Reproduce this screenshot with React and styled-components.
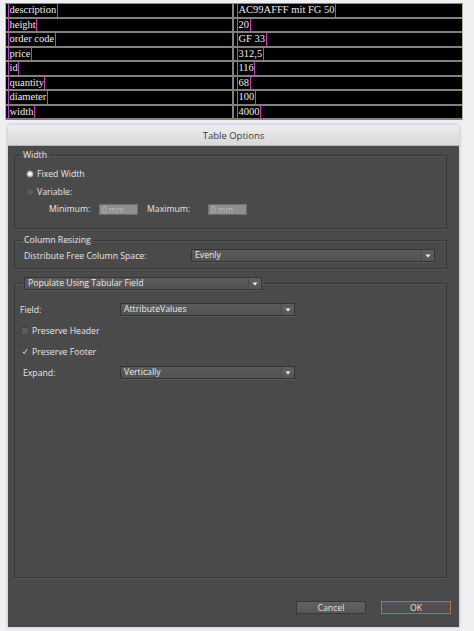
import React from 'react';
import styled, { createGlobalStyle } from 'styled-components';

const Global = createGlobalStyle`
  html, body { margin: 0; padding: 0; background: #f0f0f2; }
  body { width: 474px; height: 631px; overflow: hidden; }
`;

const Page = styled.div`
  display: flex;
  flex-direction: column;
  padding-top: 3px;
`;

const Table = styled.div`
  margin-left: 5px;
  width: 456px;
  display: grid;
  grid-template-columns: 228px 1fr;
  background: #000;
  border: 1px solid #b4b49a;
  border-top-color: #8c8984;
  border-bottom: none;
`;

const Cell = styled.div`
  height: 12.5px;
  border-bottom: 2px solid #84817c;
  padding-left: ${p => (p.$right ? 3 : 2)}px;
  border-right: ${p => (p.$right ? 'none' : '2px solid #84817c')};
  display: flex;
  align-items: stretch;
`;

const Frame = styled.span`
  border-left: 1.5px solid #c23ac6;
  border-right: 1.5px solid #c23ac6;
  padding: 0 0.5px;
  font-family: "Liberation Serif", serif;
  font-size: 10.5px;
  line-height: 12.5px;
  color: #ececec;
  white-space: nowrap;
`;

const Dialog = styled.div`
  margin: 5px 0 0 8px;
  width: 451px;
  height: 502px;
  display: flex;
  flex-direction: column;
  box-shadow: 0 0 3px 1px rgba(160, 140, 200, 0.45);
  border-radius: 4px 4px 0 0;
`;

const TitleBar = styled.div`
  height: 20px;
  flex: none;
  background: linear-gradient(#eeeeee, #d8d8d8);
  border-bottom: 1px solid #b8b8b8;
  border-radius: 4px 4px 0 0;
  display: flex;
  align-items: center;
  justify-content: center;
  font-family: "Open Sans", "DejaVu Sans", sans-serif;
  font-size: 9.5px;
  color: #3a3a3a;
`;

const Body = styled.div`
  flex: 1;
  background: #4a4a4a;
  display: flex;
  flex-direction: column;
  padding: 4px 8px 13px 6px;
  font-family: "Open Sans", "DejaVu Sans", sans-serif;
  font-size: 8.7px;
  color: #e8e8e8;
`;

const Group = styled.fieldset`
  margin: ${p => p.$top}px 4px 0 0;
  padding: 0;
  border: 1px solid #363636;
  box-shadow: 0 1px 0 #575757, inset 0 1px 0 #575757;
  min-width: 0;
  display: flex;
  flex-direction: column;
  ${p => (p.$grow ? 'flex: 1;' : '')}
`;

const Content = styled.div`
  display: flex;
  flex-direction: column;
  padding: ${p => p.$pad};
  gap: ${p => p.$gap || 0}px;
`;

const Legend = styled.legend`
  margin-left: ${p => p.$ml || 6}px;
  padding: 0 2px;
  line-height: 11px;
  color: #e8e8e8;
`;

const Row = styled.div`
  display: flex;
  align-items: center;
  height: ${p => p.$h || 14}px;
  padding-left: ${p => p.$indent || 0}px;
`;

const Radio = styled.span`
  width: 6px;
  height: 6px;
  border-radius: 50%;
  margin-right: 4px;
  flex: none;
  background: ${p => (p.$on ? 'radial-gradient(circle, #ffffff 0 35%, #bdbdbd 45%)' : '#5c5c5c')};
  box-shadow: 0 0 0 0.5px ${p => (p.$on ? '#8a8a8a' : '#3e3e3e')};
`;

const Label = styled.span`
  width: ${p => (p.$w ? `${p.$w}px` : 'auto')};
  padding-left: ${p => p.$pl || 0}px;
  box-sizing: border-box;
  flex: none;
  white-space: nowrap;
`;

const Input = styled.div`
  width: 39px;
  height: 11px;
  flex: none;
  background: #8e8e8e;
  border: 1px solid #6e6e6e;
  box-sizing: border-box;
  color: #b8b8b8;
  font-size: 8.2px;
  line-height: 9px;
  padding-left: 2px;
`;

const Select = styled.div`
  width: ${p => p.$w}px;
  height: 13px;
  flex: none;
  box-sizing: border-box;
  border: 1px solid #343434;
  background: linear-gradient(#5b5b5b, #525252);
  display: flex;
  align-items: center;
  color: #ececec;
  box-shadow: 0 1px 0 #585858;
`;

const SelectText = styled.span`
  flex: 1;
  padding-left: 3px;
  line-height: 11px;
  white-space: nowrap;
  overflow: hidden;
`;

const Arrow = styled.span`
  width: 12px;
  height: 100%;
  flex: none;
  border-left: 1px solid #4a4a4a;
  background: linear-gradient(#5f5f5f, #565656);
  display: flex;
  align-items: center;
  justify-content: center;
`;

const Check = styled.span`
  width: 6px;
  height: 6px;
  flex: none;
  margin: 0 4px 0 2px;
  background: ${p => (p.$on ? 'transparent' : '#5c5c5c')};
  box-shadow: ${p => (p.$on ? 'none' : '0 0 0 0.5px #3c3c3c')};
  display: flex;
  align-items: center;
  justify-content: center;
`;

const Footer = styled.div`
  display: flex;
  justify-content: flex-end;
  gap: 15px;
  margin-top: 23px;
`;

const Button = styled.div`
  width: 70px;
  height: 13px;
  box-sizing: border-box;
  border: 1px solid ${p => (p.$primary ? '#9c7a4c' : '#383838')};
  background: ${p => (p.$primary ? 'linear-gradient(#545454, #4c4c4c)' : 'linear-gradient(#626262, #575757)')};
  display: flex;
  align-items: center;
  justify-content: center;
  color: #e2e2e2;
  font-size: 8.7px;
`;

const ArrowIcon = () => (
  <svg width="6" height="4" viewBox="0 0 6 4">
    <path d="M0.5 0.5 H5.5 L3 3.5 Z" fill="#f2f2f2" />
  </svg>
);

const Dropdown = ({ w, children }) => (
  <Select $w={w}>
    <SelectText>{children}</SelectText>
    <Arrow>
      <ArrowIcon />
    </Arrow>
  </Select>
);

const rows = [
  ['description', 'AC99AFFF mit FG 50'],
  ['height', '20'],
  ['order code', 'GF 33'],
  ['price', '312,5'],
  ['id', '116'],
  ['quantity', '68'],
  ['diameter', '100'],
  ['width', '4000'],
];

export default function App() {
  return (
    <Page>
      <Global />
      <Table>
        {rows.map(([k, v]) => (
          <React.Fragment key={k}>
            <Cell>
              <Frame>{k}</Frame>
            </Cell>
            <Cell $right>
              <Frame>{v}</Frame>
            </Cell>
          </React.Fragment>
        ))}
      </Table>
      <Dialog>
        <TitleBar>Table Options</TitleBar>
        <Body>
          <Group $top={0}>
            <Legend $ml={6}>Width</Legend>
            <Content $pad="6px 0 13px 12px" $gap={4}>
              <Row>
                <Radio $on />
                <Label>Fixed Width</Label>
              </Row>
              <Row>
                <Radio />
                <Label>Variable:</Label>
              </Row>
              <Row $h={12} $indent={22}>
                <Label $w={50}>Minimum:</Label>
                <Input>0 mm</Input>
                <Label $w={70} $pl={9}>Maximum:</Label>
                <Input>0 mm</Input>
              </Row>
            </Content>
          </Group>
          <Group $top={6}>
            <Legend $ml={7}>Column Resizing</Legend>
            <Content $pad="3px 12px 6px 9px">
              <Row $h={13}>
                <Label $w={167}>Distribute Free Column Space:</Label>
                <Dropdown w={244}>Evenly</Dropdown>
              </Row>
            </Content>
          </Group>
          <Group $top={8} $grow>
            <Legend $ml={7}>
              <Dropdown w={238}>Populate Using Tabular Field</Dropdown>
            </Legend>
            <Content $pad="13px 0 0 5px" $gap={8}>
              <Row $h={13}>
                <Label $w={100}>Field:</Label>
                <Dropdown w={175}>AttributeValues</Dropdown>
              </Row>
              <Row $h={13}>
                <Check />
                <Label>Preserve Header</Label>
              </Row>
              <Row $h={13}>
                <Check $on>
                  <svg width="7" height="7" viewBox="0 0 7 7">
                    <path d="M0.8 3.8 L2.6 5.8 L6.2 0.6" fill="none" stroke="#f4f4f4" strokeWidth="1" />
                  </svg>
                </Check>
                <Label>Preserve Footer</Label>
              </Row>
              <Row $h={13} $indent={3}>
                <Label $w={97}>Expand:</Label>
                <Dropdown w={175}>Vertically</Dropdown>
              </Row>
            </Content>
          </Group>
          <Footer>
            <Button>Cancel</Button>
            <Button $primary>OK</Button>
          </Footer>
        </Body>
      </Dialog>
    </Page>
  );
}
